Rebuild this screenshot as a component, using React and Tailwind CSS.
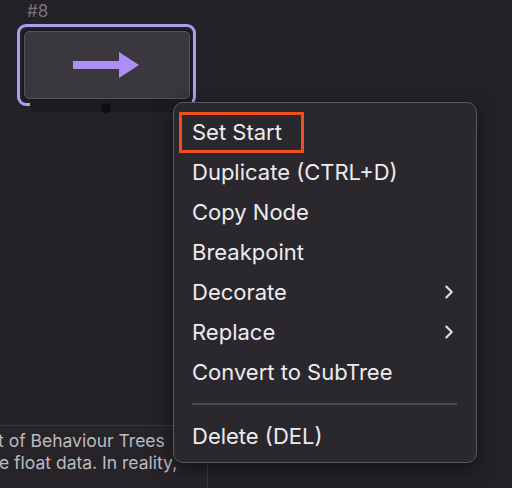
import { ChevronRight } from "lucide-react";

const ITEMS = [
  { label: "Set Start" },
  { label: "Duplicate (CTRL+D)" },
  { label: "Copy Node" },
  { label: "Breakpoint" },
  { label: "Decorate", sub: true },
  { label: "Replace", sub: true },
  { label: "Convert to SubTree" },
];

function MenuItem({ label, sub }) {
  return (
    <div className="h-[40px] flex items-center justify-between pr-[16px]">
      <span>{label}</span>
      {sub && <ChevronRight size={22} strokeWidth={2.2} className="text-[#e6e4ea]" />}
    </div>
  );
}

function ActionNode() {
  return (
    <div className="absolute left-[17px] top-[1px] flex flex-col">
      <span className="ml-[10px] text-[17px] leading-[21px] text-[#77757b]">#8</span>
      <div className="relative mt-[2px] w-[179px] h-[82px] rounded-[9px] border-[3px] border-[#a79ff0] pl-[2px] pt-[2px] pr-[1px] pb-[2px]">
        <div className="absolute left-[10px] top-[72px] w-[162px] h-[13px] bg-[#1d1b1f] rounded-b-md" />
        <div className="absolute left-[81px] top-[76px] w-[10px] h-[10px] rounded-full bg-[#0f0e10]" />
        <div className="relative w-full h-full rounded-md bg-[#1c1a1e] p-[2px]">
          <div className="w-full h-full rounded-[5px] bg-[#3a383e] border border-[#55535a] flex items-center justify-center">
            <svg width="68" height="28" viewBox="0 0 68 28">
              <rect x="0" y="10" width="50" height="8" fill="#ad8ef4" />
              <polygon points="46,1 66,14 46,27" fill="#ad8ef4" />
            </svg>
          </div>
        </div>
      </div>
    </div>
  );
}

export default function App() {
  return (
    <div className="relative w-[512px] h-[488px] bg-[#242227] overflow-hidden flex flex-col font-['Inter','Open_Sans',sans-serif]">
      <ActionNode />

      {/* bottom-left info panel */}
      <div className="mt-auto w-[208px] h-[63px] bg-[#262429] border-t border-r border-[#3b393e] overflow-hidden pt-[4px] text-[17.5px] leading-[22px] text-[#bcbac0] whitespace-nowrap">
        <div className="-ml-[12px]">ct of Behaviour Trees</div>
        <div className="-ml-[16px]">ble float data. In reality,</div>
      </div>

      {/* context menu */}
      <div className="absolute left-[173px] top-[102px] w-[304px] h-[361px] rounded-[10px] border border-[#5a585e] bg-[#2a282d] shadow-[0_6px_20px_rgba(0,0,0,0.5)] pl-[18px] pt-[9px] text-[22px] text-[#ecebef]">
        {ITEMS.map((it) => (
          <MenuItem key={it.label} {...it} />
        ))}
        <div className="mt-[11px] mb-[11px] mr-[19px] h-[2px] bg-[#4d4b51]" />
        <MenuItem label="Delete (DEL)" />
        <div className="absolute left-[5px] top-[9px] w-[125px] h-[41px] border-[3px] border-[#f04e1c]" />
      </div>
    </div>
  );
}
